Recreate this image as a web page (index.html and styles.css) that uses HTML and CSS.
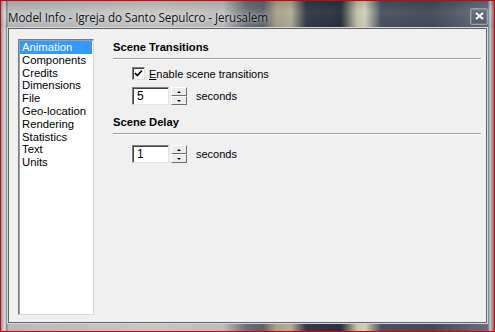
FILE: index.html
```html
<!DOCTYPE html>
<html>
<head>
<meta charset="utf-8">
<link rel="stylesheet" href="styles.css">
</head>
<body>
<div class="window">
  <div class="titlebar">
    <span class="title">Model Info - Igreja do Santo Sepulcro - Jerusalem</span>
    <div class="close"><svg width="9" height="8" viewBox="0 0 9 8"><path d="M1 1 L8 7 M8 1 L1 7" stroke="#fff" stroke-width="2"/></svg></div>
  </div>
  <div class="client">
    <ul class="list">
      <li class="sel">Animation</li>
      <li>Components</li>
      <li>Credits</li>
      <li>Dimensions</li>
      <li>File</li>
      <li>Geo-location</li>
      <li>Rendering</li>
      <li>Statistics</li>
      <li>Text</li>
      <li>Units</li>
    </ul>
    <div class="panel">
      <div class="heading">Scene Transitions</div>
      <div class="sep"></div>
      <div class="row check-row">
        <span class="checkbox"><svg width="9" height="9" viewBox="0 0 9 9"><path d="M1 4 L3.3 6.5 L8 1.5" stroke="#000" stroke-width="1.8" fill="none"/></svg></span>
        <span class="label"><u>E</u>nable scene transitions</span>
      </div>
      <div class="row spin-row">
        <span class="input">5</span>
        <span class="spin"><span class="btn"><i class="up"></i></span><span class="btn"><i class="down"></i></span></span>
        <span class="unit">seconds</span>
      </div>
      <div class="heading h2">Scene Delay</div>
      <div class="sep"></div>
      <div class="row spin-row first">
        <span class="input">1</span>
        <span class="spin"><span class="btn"><i class="up"></i></span><span class="btn"><i class="down"></i></span></span>
        <span class="unit">seconds</span>
      </div>
    </div>
  </div>
</div>
</body>
</html>
```
FILE: styles.css
```css
html, body {
  margin: 0;
  padding: 0;
  width: 495px;
  height: 332px;
  overflow: hidden;
  font-family: "Liberation Sans", Arial, sans-serif;
  font-size: 11px;
  color: #000;
}
.window {
  box-sizing: border-box;
  width: 495px;
  height: 332px;
  border: 1px solid #d80000;
  display: flex;
  flex-direction: column;
  padding: 0 7px 8px 7px;
  background:
    linear-gradient(to right, #9aa0a6 0, #c8cacc 3px, #e0e2e4 4px, #70747a 6px, rgba(0,0,0,0) 7px, rgba(0,0,0,0) 486px, #70747a 487px, #c8cacc 489px, #6a7080 493px),
    linear-gradient(to right, #b6b8ba 0, #c6c6c4 150px, #bcbcbc 222px, #6c7078 245px, #5a626c 262px, #a8a08a 275px, #b4ae96 290px, #323a4a 305px, #283040 340px, #c4c4a4 356px, #d2d2bc 364px, #4a5262 380px, #424a5a 430px, #5c6474 470px, #6a7080 495px);
}
.titlebar {
  height: 27px;
  flex: 0 0 27px;
  display: flex;
  align-items: center;
  justify-content: space-between;
  margin: 0 -7px;
  padding: 0 6px 0 7px;
  background: linear-gradient(to bottom, rgba(0,0,0,0.12), rgba(255,255,255,0.04) 40%, rgba(0,0,0,0.05));
}
.title {
  font-family: "Open Sans", "Noto Sans", sans-serif;
  font-size: 11.7px;
  color: #111;
  padding-top: 4px;
  letter-spacing: -0.1px;
  text-shadow: 0 0 6px rgba(255,255,255,0.7), 0 0 3px rgba(255,255,255,0.5);
}
.close {
  width: 18px;
  height: 17px;
  margin-top: 3px;
  box-sizing: border-box;
  border: 1px solid #9aa0a8;
  border-radius: 2px;
  background: linear-gradient(#6e7482, #545a68);
  display: flex;
  align-items: center;
  justify-content: center;
  box-shadow: inset 0 0 0 1px rgba(255,255,255,0.15);
}
.client {
  flex: 1;
  display: flex;
  background: #f0f0f0;
  border: 1px solid #5e6266;
  outline: 1px solid #d8dadc;
  padding: 10px 4px 7px 9px;
}
.list {
  list-style: none;
  margin: 0;
  padding: 1px;
  width: 76px;
  box-sizing: border-box;
  background: #fff;
  border: 1px solid #7a7a7a;
  border-right-color: #d8d8d8;
  border-bottom-color: #d8d8d8;
  box-shadow: inset 1px 1px 0 #a0a0a0;
  font-size: 11.3px;
}
.list li {
  height: 12.8px;
  line-height: 12.8px;
  padding-left: 2px;
  white-space: nowrap;
}
.list li.sel {
  background: #3399ff;
  color: #fff;
}
.panel {
  flex: 1;
  margin-left: 19px;
  padding-top: 0;
  display: flex;
  flex-direction: column;
}
.heading {
  font-weight: bold;
  font-size: 11.2px;
  line-height: 14px;
  margin-top: 1px;
}
.heading.h2 {
  margin-top: 10px;
}
.sep {
  height: 1px;
  background: #a0a0a0;
  border-bottom: 1px solid #fff;
  margin-top: 4px;
  margin-right: 1px;
}
.row {
  display: flex;
  align-items: center;
  padding-left: 19px;
}
.check-row {
  margin-top: 7px;
  height: 13px;
}
.checkbox {
  width: 13px;
  height: 13px;
  box-sizing: border-box;
  background: #fff;
  border: 1px solid #808080;
  border-right-color: #e0e0e0;
  border-bottom-color: #e0e0e0;
  box-shadow: inset 1px 1px 0 #404040;
  display: flex;
  align-items: center;
  justify-content: center;
}
.label {
  margin-left: 4px;
  font-size: 11px;
}
.spin-row {
  margin-top: 7px;
  height: 18px;
}
.spin-row.first {
  margin-top: 10px;
}
.input {
  width: 37px;
  height: 18px;
  box-sizing: border-box;
  background: #fff;
  border: 1px solid #808080;
  border-right-color: #e4e4e4;
  border-bottom-color: #e4e4e4;
  box-shadow: inset 1px 1px 0 #404040;
  padding-left: 4px;
  font-size: 12px;
  line-height: 16px;
}
.spin {
  display: flex;
  flex-direction: column;
  margin-left: 2px;
  width: 16px;
  height: 18px;
}
.btn {
  flex: 1;
  box-sizing: border-box;
  background: #ececec;
  border: 1px solid #fff;
  border-right-color: #707070;
  border-bottom-color: #707070;
  display: flex;
  align-items: center;
  justify-content: center;
}
.up {
  width: 0;
  height: 0;
  border-left: 2px solid transparent;
  border-right: 2px solid transparent;
  border-bottom: 2px solid #000;
}
.down {
  width: 0;
  height: 0;
  border-left: 2px solid transparent;
  border-right: 2px solid transparent;
  border-top: 2px solid #000;
}
.unit {
  margin-left: 9px;
  font-size: 11px;
}
```
